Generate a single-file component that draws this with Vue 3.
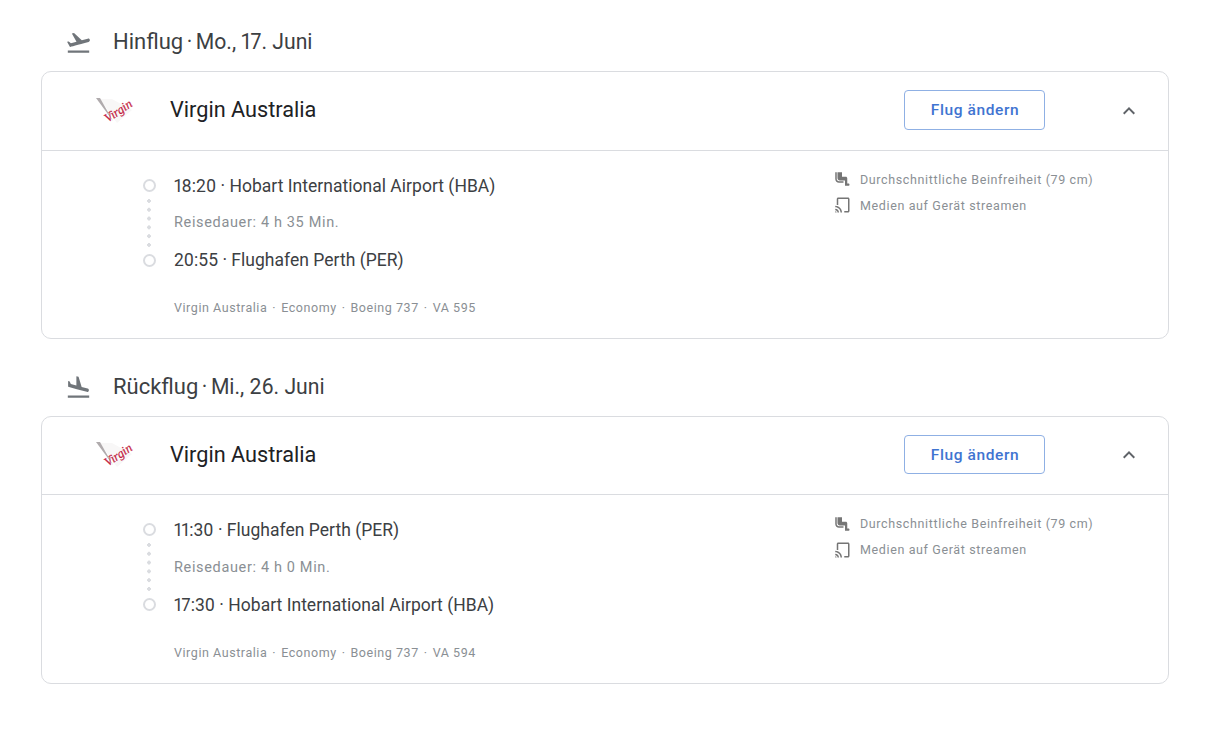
<script setup>
const flights = [
  { title: 'Hinflug', date: 'Mo., 17. Juni', kind: 'out', from: '18:20 · Hobart International Airport (HBA)', dur: 'Reisedauer: 4 h 35 Min.', to: '20:55 · Flughafen Perth (PER)', meta: ['Virgin Australia', 'Economy', 'Boeing 737', 'VA 595'] },
  { title: 'Rückflug', date: 'Mi., 26. Juni', kind: 'back', from: '11:30 · Flughafen Perth (PER)', dur: 'Reisedauer: 4 h 0 Min.', to: '17:30 · Hobart International Airport (HBA)', meta: ['Virgin Australia', 'Economy', 'Boeing 737', 'VA 594'] }
]
</script>

<template>
  <main class="page">
    <section v-for="f in flights" :key="f.title" class="section">
      <h2 class="heading">
        <svg class="plane" viewBox="0 0 24 24" width="27" height="27" aria-hidden="true">
          <path v-if="f.kind === 'out'" fill="#70757a" d="M2.5 19h19v2h-19v-2zm19.57-9.36c-.21-.8-1.04-1.28-1.84-1.06L14.92 10 8 3.57l-1.91.51 4.14 7.17-4.97 1.33-1.97-1.54-1.45.39 2.59 4.49c0 0 7.12-1.9 16.57-4.43.81-.23 1.28-1.05 1.07-1.85z" />
          <path v-else fill="#70757a" d="M2.5 19h19v2h-19v-2zm7.18-5.73 4.35 1.16 5.31 1.42c.8.21 1.62-.26 1.84-1.06.21-.8-.26-1.62-1.06-1.84l-5.31-1.42-2.76-9.02L10.12 2v8.28L5.15 8.95l-.93-2.32-1.45-.39v5.17l1.6.43 5.31 1.43z" />
        </svg>
        <span class="heading-text"><span class="title">{{ f.title }}</span><span class="sep">·</span>{{ f.date }}</span>
      </h2>

      <article class="card">
        <header class="card-head">
          <div class="logo" aria-hidden="true">
            <svg viewBox="0 0 40 28" width="40" height="28">
              <path fill="#f8f7f7" d="M5 2h12l20 11-15 13z" />
              <path fill="#b0abad" d="M1 1h4l13 23z" />
            </svg>
            <span class="virgin">Virgin</span>
          </div>
          <div class="airline">Virgin Australia</div>
          <button class="change" type="button">Flug ändern</button>
          <svg class="chev" viewBox="0 0 24 24" width="24" height="24" aria-hidden="true">
            <path fill="#5f6368" d="M12 8l-6 6 1.41 1.41L12 10.83l4.59 4.58L18 14z" />
          </svg>
        </header>

        <div class="card-body">
          <div class="itinerary">
            <div class="rail">
              <span class="ring"></span>
              <span class="dots"></span>
              <span class="ring"></span>
            </div>
            <div class="stops">
              <div class="stop">{{ f.from }}</div>
              <div class="dur">{{ f.dur }}</div>
              <div class="stop">{{ f.to }}</div>
              <div class="meta">
                <template v-for="(m, i) in f.meta" :key="m">
                  <span v-if="i" class="msep">·</span>{{ m }}
                </template>
              </div>
            </div>
          </div>

          <ul class="amenities">
            <li>
              <svg viewBox="0 0 24 24" width="18" height="18" aria-hidden="true">
                <path fill="#757575" d="M5 12V3H3v9c0 2.76 2.24 5 5 5h6v-2H8c-1.66 0-3-1.34-3-3zm15.5 6H19v-7c0-1.1-.9-2-2-2h-5V3H6v8c0 1.65 1.35 3 3 3h7v7h4.5c.83 0 1.5-.67 1.5-1.5s-.67-1.5-1.5-1.5z" />
              </svg>
              Durchschnittliche Beinfreiheit (79 cm)
            </li>
            <li>
              <svg viewBox="0 0 24 24" width="18" height="18" aria-hidden="true">
                <path fill="#757575" d="M7 2h13c1.1 0 2 .9 2 2v16c0 1.1-.9 2-2 2h-5v-2h5V4H7v8H5V4c0-1.1.9-2 2-2zM3 13c4.97 0 9 4.03 9 9h-2c0-3.87-3.13-7-7-7v-2zm0 4c2.76 0 5 2.24 5 5H6c0-1.66-1.34-3-3-3v-2zm0 3.2a1.8 1.8 0 0 1 1.8 1.8H3v-1.8z" />
              </svg>
              Medien auf Gerät streamen
            </li>
          </ul>
        </div>
      </article>
    </section>
  </main>
</template>

<style scoped>
.page {
  width: 1225px;
  height: 735px;
  padding: 25.1px 56px 0 41px;
  box-sizing: border-box;
  font-family: Roboto, "Liberation Sans", sans-serif;
  background: #fff;
  overflow: hidden;
}
.section { margin-bottom: 30.5px; }
.heading {
  display: flex;
  align-items: center;
  gap: 21px;
  height: 32px;
  margin: 0 0 14px 24px;
  padding: 0;
  font-weight: 400;
  font-size: 21.2px;
  color: #3c4043;
  white-space: nowrap;
}
.heading-text { padding-top: 1px; font-variant-numeric: proportional-nums; }
.title { font-size: 22px; }
.plane { flex: none; margin-top: 3px; }
.sep { margin: 0 3.5px; }
.card {
  height: 268px;
  box-sizing: border-box;
  border: 1px solid #dadce0;
  border-radius: 10px;
  background: #fff;
}
.card-head {
  display: flex;
  align-items: center;
  height: 77.5px;
  border-bottom: 1px solid #dadce0;
  padding-left: 53px;
}
.logo {
  position: relative;
  width: 40px;
  height: 28px;
  flex: none;
}
.logo svg { display: block; }
.virgin {
  position: absolute;
  left: 8px;
  top: 7px;
  font-family: "Liberation Serif", serif;
  font-style: italic;
  font-size: 12.5px;
  line-height: 14px;
  -webkit-text-stroke: .2px #c2183c;
  color: #c2183c;
  transform: rotate(-34deg);
}
.airline {
  margin: 0 0 2.4px 35px;
  font-size: 21.7px;
  color: #202124;
  flex: 1;
}
.change {
  width: 141px;
  height: 39.6px;
  margin-bottom: 1.9px;
  box-sizing: border-box;
  border: 1px solid #8fb0e4;
  border-radius: 4px;
  background: #fff;
  color: #3f74d1;
  font-family: inherit;
  font-size: 15.5px;
  font-weight: 500;
  letter-spacing: .6px;
  padding: .6px 0 0 1px;
}
.chev { flex: none; margin: 0 27px 0 72px; }
.card-body {
  display: flex;
  justify-content: space-between;
  padding: 23px 0 0 100px;
}
.itinerary { display: flex; gap: 18px; }
.rail {
  width: 14px;
  padding-top: 5px;
  display: flex;
  flex-direction: column;
  align-items: center;
}
.ring {
  width: 13px;
  height: 13px;
  box-sizing: border-box;
  border: 2px solid #dadce0;
  border-radius: 50%;
  flex: none;
}
.dots {
  width: 4px;
  height: 48px;
  margin: 7px 0;
  background: radial-gradient(circle at 2px 2px, #dadce0 1.9px, transparent 2px) 0 0 / 4px 8.8px repeat-y;
}
.stops { color: #3c4043; }
.stop {
  font-size: 17.5px;
  line-height: 24px;
  height: 24px;
  white-space: nowrap;
  font-variant-numeric: proportional-nums;
  letter-spacing: .02px;
}
.dur {
  font-size: 14.5px;
  letter-spacing: .65px;
  color: #8a8f94;
  line-height: 24px;
  margin: 13.5px 0 13px;
  height: 24px;
}
.meta {
  margin-top: 26px;
  font-size: 12.5px;
  letter-spacing: .56px;
  line-height: 20px;
  color: #8a8f94;
  white-space: nowrap;
}
.msep { margin: 0 5px; }
.amenities {
  list-style: none;
  margin: -7.5px 76px 0 0;
  padding: 0;
  width: 259px;
  font-size: 12.5px;
  letter-spacing: .63px;
  color: #8a8f94;
}
.amenities li {
  display: flex;
  align-items: center;
  gap: 9px;
  height: 26px;
  white-space: nowrap;
}
.amenities svg { flex: none; }
</style>
